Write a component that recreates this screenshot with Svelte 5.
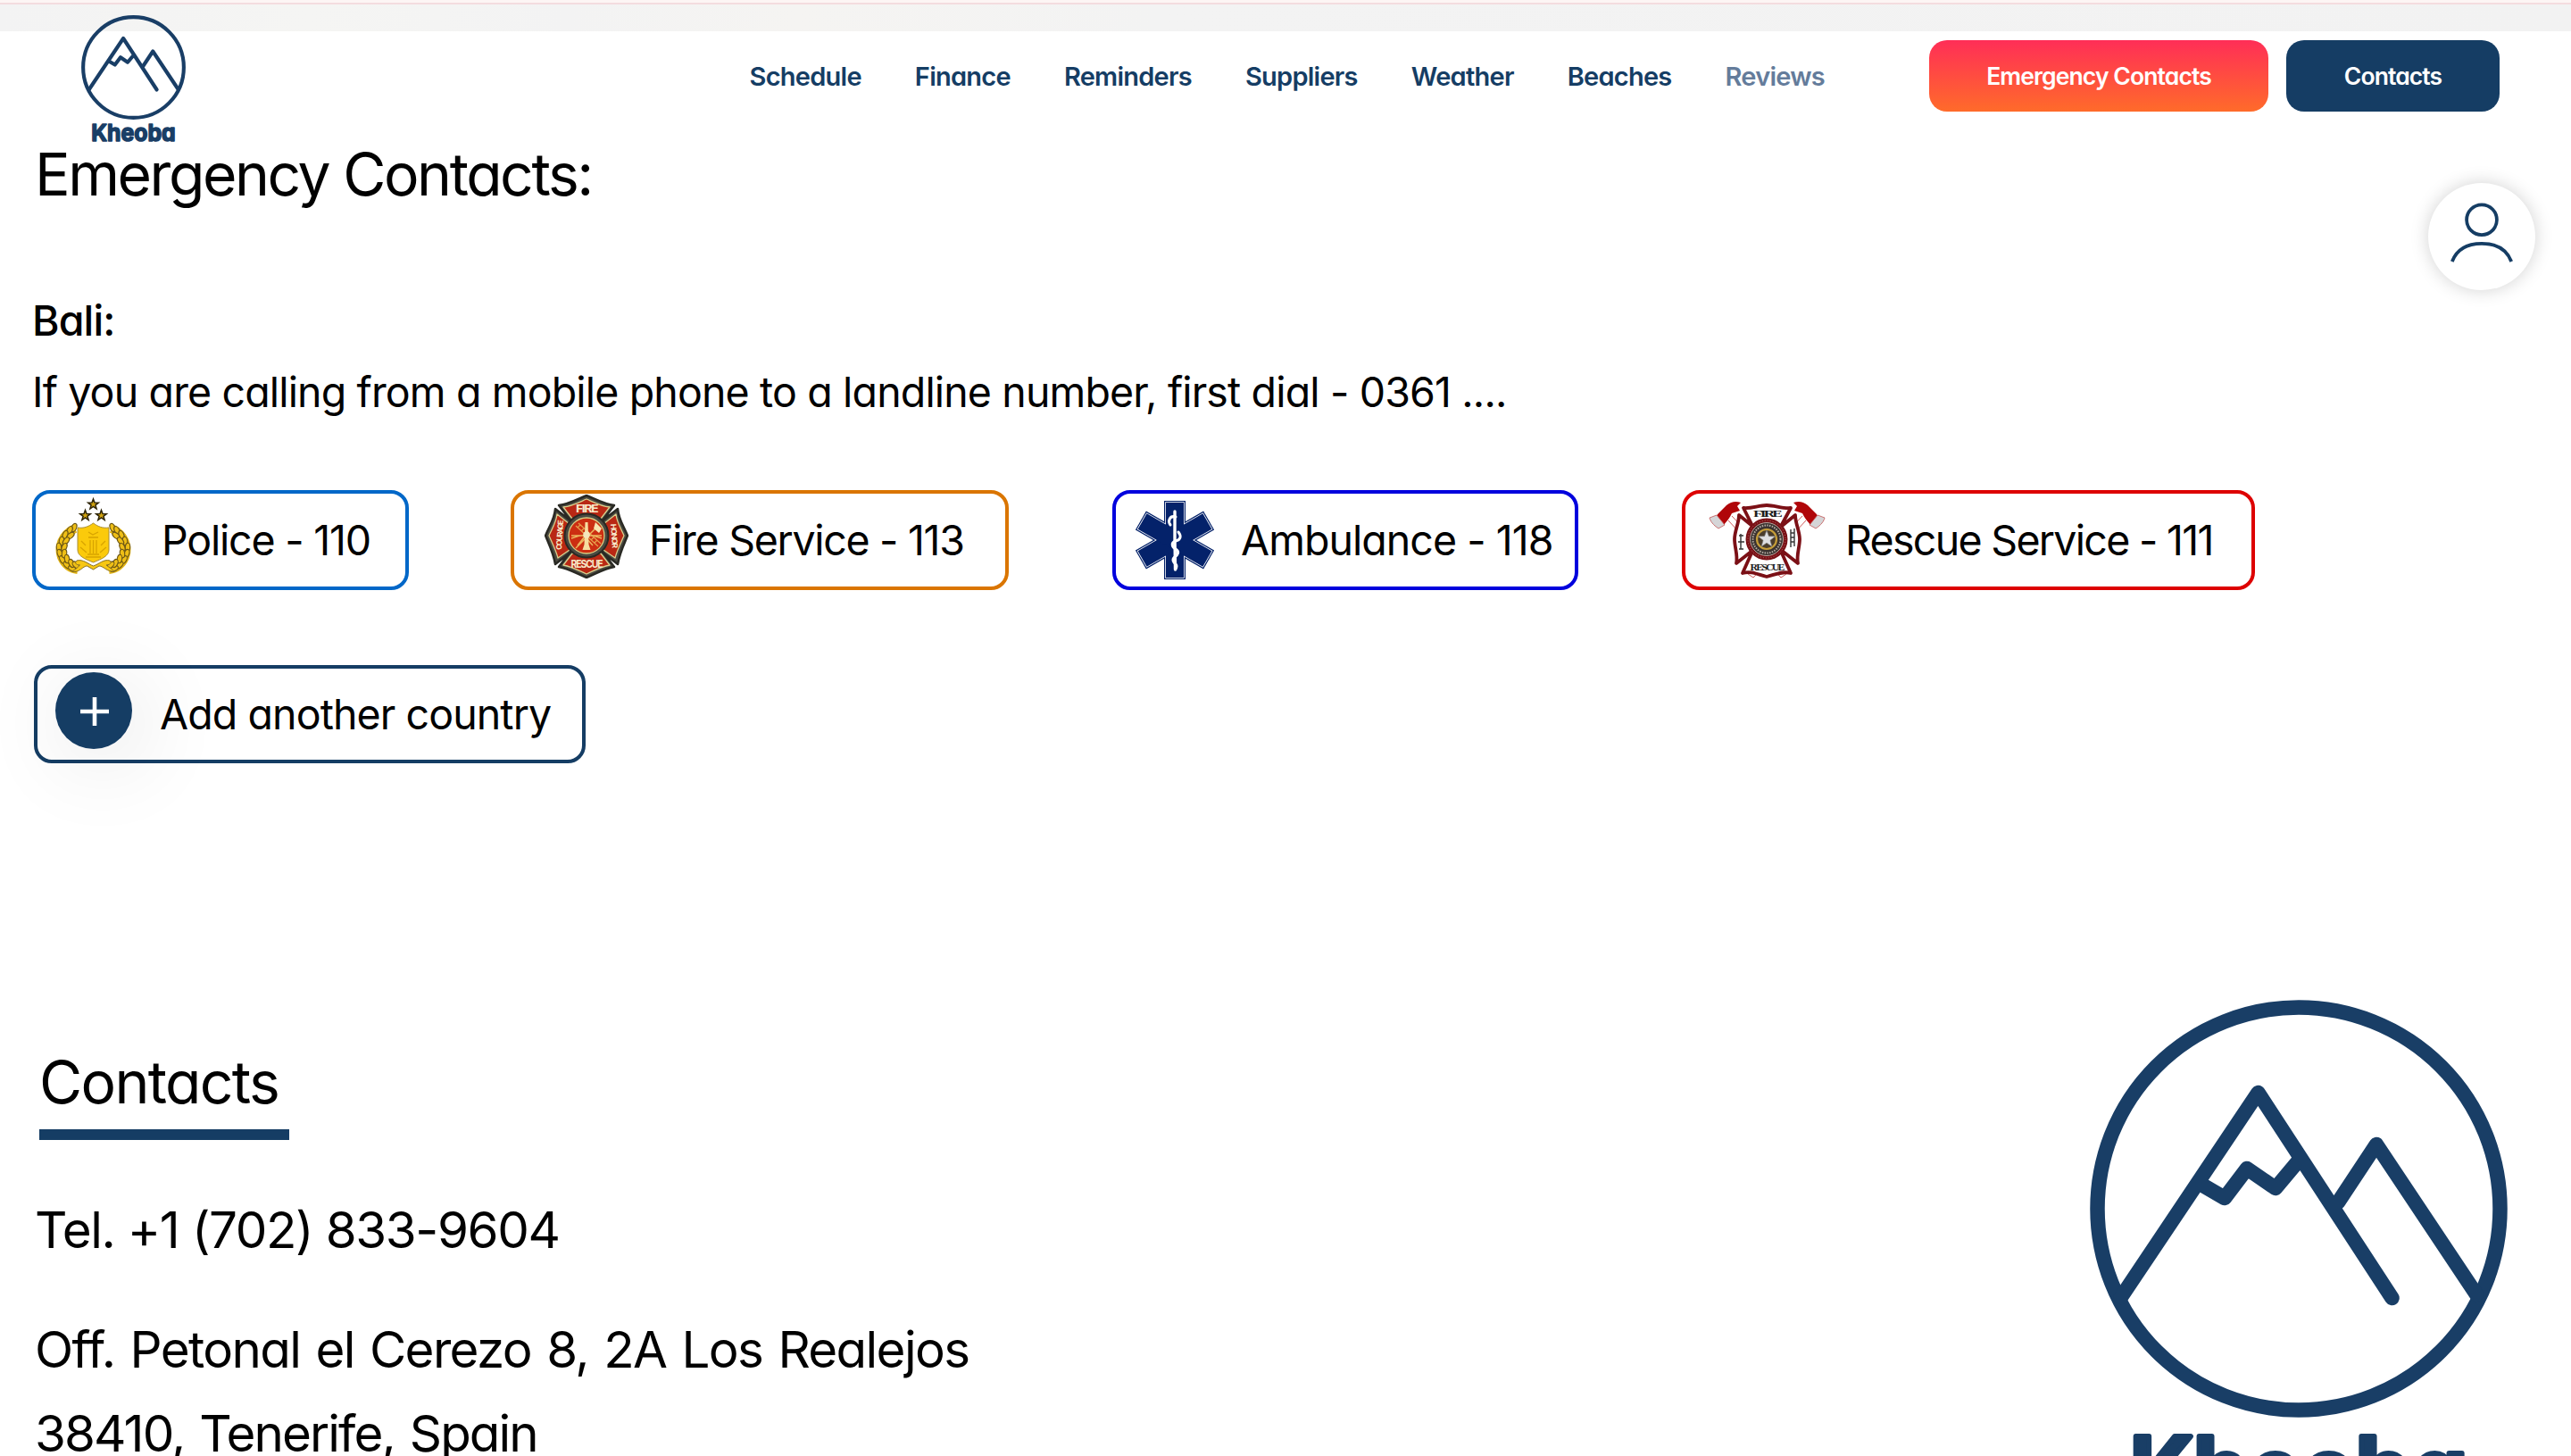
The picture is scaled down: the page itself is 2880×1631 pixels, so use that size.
<script>
  const nav = ['Schedule', 'Finance', 'Reminders', 'Suppliers', 'Weather', 'Beaches', 'Reviews'];
  const services = [
    { id: 'police', label: 'Police - 110' },
    { id: 'fire', label: 'Fire Service - 113' },
    { id: 'ambulance', label: 'Ambulance - 118' },
    { id: 'rescue', label: 'Rescue Service - 111' }
  ];
  const star = 'M0-6 1.5-2 5.8-1.9 2.4.8 3.6 5 0 2.5-3.6 5-2.4.8-5.8-1.9-1.5-2Z';
  // leaf positions around the left half of the wreath: x, y, angle
  const leaves = [
    [23, 36, 20], [18, 39, 28], [13, 44, 22], [9, 51, 8], [6, 58, -4], [7, 65, -18], [10, 72, -30], [15, 78, -45], [21, 82, -60],
    [19, 45, 50], [14, 51, 38], [12, 58, 24], [12, 65, 8], [15, 71, -8], [20, 76, -26], [25, 78, -45]
  ];
  const limbs = [0, 60, 120];
</script>

{#snippet mark(cls)}
  <svg class={cls} viewBox="0 0 468 592" fill="none">
    <g stroke="#193e66" stroke-width="16.5" stroke-linecap="round" stroke-linejoin="round">
      <circle cx="234" cy="234" r="225.5" />
      <path d="M35 333 188.500 104 338.500 334M127 208l24 14 25-33 32 22 26-31M278 227l43-65 112 168" />
    </g>
    <text x="45" y="565" textLength="378" lengthAdjust="spacingAndGlyphs" class="word">Kheoba</text>
  </svg>
{/snippet}

{#snippet police()}
  <svg class="emblem" viewBox="0 0 90 92">
    {#each [[44.500, 10], [35.500, 22.500], [53.500, 22.500]] as [x, y]}
      <path d={star} transform="translate({x} {y})" fill="#d0a20f" stroke="#2e2508" stroke-width="1.500" />
    {/each}
    {#each [1, -1] as side}
      <g transform={side === 1 ? '' : 'translate(89 0) scale(-1 1)'}>
        <path d="M24 37C9 44 5 58 9 69c4 9 10 13 18 14" fill="none" stroke="#e0b213" stroke-width="10" />
        {#each leaves as [x, y, a]}
          <ellipse rx="2.700" ry="4.800" transform="translate({x} {y}) rotate({a})" fill="#efbf16" stroke="#6c5717" stroke-width="1.100" />
        {/each}
      </g>
    {/each}
    <path d="M27 36c7 1 12-1 17.500-5C50 35 55 37 62 36v25c0 7-8 10-17.500 14C35 71 27 68 27 61Z" fill="#fbca0b" stroke="#a88d35" stroke-width="1" />
    <path d="M39 47h11M41 50v15M48 50v15M38 66h13M36 69h17M31 51l5 5M30 58l7 6M58 51l-5 5M59 58l-7 6M39 41l5 3 6-3M44.500 50v15" fill="none" stroke="#d8a400" stroke-width="1.300" />
    <path d="M26 73c7-2 13 4 18.500 6C51 77 56 71 63 73c3 2 0 5-4 5 4 3 7 5 9 7-8 1-12-6-17-6l-6.500 4-7-4c-5 0-8 8-17 6 4-2 6-4 9-7-5 0-6-3-3.500-5Z" fill="#f7c713" stroke="#877025" stroke-width="1" />
  </svg>
{/snippet}

{#snippet fire()}
  <svg class="emblem" viewBox="0 0 94 94">
    <g stroke="#292923" stroke-width="2.500" stroke-linejoin="round">
      <path d="M16 12C27 11 35 6 47 1c12 5 20 10 31 11L65 29H29ZM16 81c11 2 19 7 31 12 12-5 20-10 31-12L65 64H29ZM12 16C11 28 6 34 1 46c5 12 9 20 11 32l18-14V30ZM82 16c1 12 6 18 11 30-5 12-9 20-11 32L64 64V30Z" fill="#4b4a42" />
      <path d="M21 14c10-1 17-5 26-9 9 4 16 8 26 9L63 27H31ZM21 79c10 2 17 6 26 10 9-4 16-8 26-10L63 66H31ZM14 22C13 31 9 37 5 46c4 9 8 17 10 25l13-9V33ZM80 22c1 9 5 15 9 24-4 9-8 17-10 25l-13-9V33Z" fill="#b92814" stroke="#d9d08d" stroke-width="1.300" />
    </g>
    <circle cx="47" cy="46" r="24.500" fill="#4b4a42" stroke="#292923" stroke-width="2" />
    <circle cx="47" cy="46" r="20" fill="#cc2e12" stroke="#d9cf83" stroke-width="1.300" />
    <path d="M35 35 60 58M38 32l25 23M37 37l3-3M41 41l3-3M52 51l3-3M56 54l3-3" stroke="#e7a04c" stroke-width="1.200" />
    <path d="M60 35 35 60M30 46h34M30 49q17-7 34 0M37 57l8-10 9 10" fill="none" stroke="#ecb75e" stroke-width="1.500" />
    <path d="M45.500 31h3l1 25 2 6h-9l2-6Z" fill="#f6dda0" />
    <path d="m57 31 7 7-3 5-6-5Z" fill="#f8e5b0" />
    <circle cx="47" cy="45" r="3.800" fill="#f4e6bd" />
    <g class="badge-text" fill="#f8eacb">
      <text x="47" y="19.500" text-anchor="middle" font-size="11.500" textLength="24" lengthAdjust="spacingAndGlyphs">FIRE</text>
      <text x="47" y="82" text-anchor="middle" font-size="12" textLength="35" lengthAdjust="spacingAndGlyphs">RESCUE</text>
      <text transform="translate(20 46) rotate(-86)" text-anchor="middle" font-size="8.500" textLength="32" lengthAdjust="spacingAndGlyphs">COURAGE</text>
      <text transform="translate(75 46) rotate(86)" text-anchor="middle" font-size="8.500" textLength="26" lengthAdjust="spacingAndGlyphs">HONOR</text>
    </g>
  </svg>
{/snippet}

{#snippet ambulance()}
  <svg class="emblem" viewBox="0 0 90 90">
    {#each limbs as a}
      <rect x="33" y="1" width="24" height="88" transform="rotate({a} 45 45)" fill="#04226a" />
    {/each}
    {#each limbs as a}
      <rect x="34.200" y="2.200" width="21.600" height="85.600" transform="rotate({a} 45 45)" fill="#fff" />
    {/each}
    {#each limbs as a}
      <rect x="35" y="3" width="20" height="84" transform="rotate({a} 45 45)" fill="#04226a" />
    {/each}
    <path d="M45 13v30M45 43l.5 35" stroke="#fff" stroke-width="3.400" stroke-linecap="round" fill="none" />
    <path d="M46 19c-7-2-9 5-6 9M49 36c4 5 2 9-3 10-6 2-4 7 0 9 5 3 2 7-1 9-4 3-1 6 1 8" fill="none" stroke="#fff" stroke-width="3" stroke-linecap="round" />
    <path d="M47 72c2 3 0 5-1 7" stroke="#fff" stroke-width="1.500" fill="none" />
  </svg>
{/snippet}

{#snippet rescue()}
  <svg class="emblem wide" viewBox="0 0 132 88">
    {#each [1, -1] as side}
      <g transform={side === 1 ? '' : 'translate(131 0) scale(-1 1)'}>
        <path d="m26 17 61 65-6 4L22 22" fill="#fff" stroke="#cf5a5a" stroke-width="1" />
        <path d="M10 15 20 5c5-4 10-5 16-3l-4 4 3 5-9 3c-2 5-6 9-9 13L9 17Z" fill="#b00609" />
        <path d="m9 16 9 11-7 4C5 27 2 23 1 19Z" fill="#d5d5d7" stroke="#c25555" stroke-width=".8" />
      </g>
    {/each}
    <g fill="#fff" stroke="#7b1016" stroke-width="3.800" stroke-linejoin="round">
      <path d="M39 8c9 1 17-3 26-3s18 4 27 3L79 32H51ZM38 81c10-3 18 2 27 4 9-2 18-7 27-4L79 52H51ZM34 16c0 9-5 18-5 27s4 18 2 27l19-15V29ZM97 16c0 9 5 18 5 27s-4 18-2 27L81 55V29Z" />
    </g>
    <circle cx="65" cy="43" r="23.500" fill="#791016" />
    <circle cx="65" cy="43" r="18.500" fill="#3b3330" stroke="#b5a79e" stroke-width="1" />
    <circle cx="65" cy="43" r="15.500" fill="none" stroke="#b6ada4" stroke-width="2" stroke-dasharray="1.500 1.300" />
    <circle cx="65" cy="43" r="21" fill="none" stroke="#bd7b70" stroke-width=".9" stroke-dasharray="1 2" />
    <circle cx="65" cy="43" r="11" fill="#4a3c2b" stroke="#c69e39" stroke-width="2.200" />
    <path d={star} transform="translate(65 43) scale(1.650)" fill="#dedee0" stroke="#777" stroke-width=".4" />
    <path d="M36 37v17M34 39h5M33 46h7M34 54h5M92 32v20M96 31v20M92 36h4M92 41h4M92 46h4" stroke="#333" stroke-width="1.400" fill="none" />
    <g class="serif" fill="#1d1d1d">
      <text x="65" y="18" text-anchor="middle" font-size="10.500" textLength="30" lengthAdjust="spacingAndGlyphs">FIRE</text>
      <text x="65" y="77.500" text-anchor="middle" font-size="11" textLength="37" lengthAdjust="spacingAndGlyphs">RESCUE</text>
    </g>
  </svg>
{/snippet}

<div class="page">
  <div class="strip"></div>

  <header>
    {@render mark('logo')}
    <nav>
      {#each nav as item}
        <a href="#top" class:muted={item === 'Reviews'}>{item}</a>
      {/each}
    </nav>
    <div class="actions">
      <button class="btn hot">Emergency Contacts</button>
      <button class="btn navy">Contacts</button>
    </div>
  </header>

  <button class="user" aria-label="Account">
    <svg viewBox="0 0 72 68" fill="none" stroke="#153d64" stroke-width="3.800">
      <circle cx="36" cy="20.200" r="16.900" />
      <path d="M2.800 67C8 53 20 46.800 36 46.800S64 53 69.200 67" />
    </svg>
  </button>

  <main>
    <h1>Emergency Contacts:</h1>
    <div class="intro">
      <h2>Bali:</h2>
      <p>If you are calling from a mobile phone to a landline number, first dial - 0361 ....</p>
    </div>

    <div class="cards">
      {#each services as s}
        <div class="card {s.id}">
          {#if s.id === 'police'}{@render police()}
          {:else if s.id === 'fire'}{@render fire()}
          {:else if s.id === 'ambulance'}{@render ambulance()}
          {:else}{@render rescue()}{/if}
          <span>{s.label}</span>
        </div>
      {/each}
    </div>

    <button class="add">
      <span class="plus">
        <svg viewBox="0 0 32 32"><path d="M16 0v32M0 16h32" stroke="#fff" stroke-width="4.600" /></svg>
      </span>
      <span class="add-label">Add another country</span>
    </button>

    <section class="contacts">
      <div>
        <h3>Contacts</h3>
        <p class="tel">Tel. +1 (702) 833-9604</p>
        <p class="addr">Off. Petonal el Cerezo 8, 2A Los Realejos<br /><span class="city">38410, Tenerife, Spain</span></p>
      </div>
      {@render mark('big')}
    </section>
  </main>
</div>

<style>
  :global(body) { margin: 0; background: #fff; overflow: hidden; }
  .page {
    position: relative;
    display: flow-root;
    height: 1631px;
    overflow: hidden;
    background: linear-gradient(#fdf5f4 3px, #fff 3px);
    color: #000;
    font-family: Inter, Lato, sans-serif;
    font-feature-settings: 'cv11';
    font-weight: 400;
    white-space: nowrap;
  }
  h1, h2, h3, p { margin: 0; font-weight: inherit; }
  button { font: inherit; font-feature-settings: inherit; color: inherit; border: 0; padding: 0; background: none; }

  .strip {
    height: 30px;
    border-top: 2px solid #f4dcdf;
    background: linear-gradient(90deg, #f3f3f3, #f5f5f3 12%, #f3f3f3 22%, #f5f4f2 31%, #f3f3f3 45%, #f2f2f2);
    margin-top: 3px;
  }

  header {
    position: absolute;
    inset: 0 0 auto 0;
    height: 170px;
    box-sizing: border-box;
    padding: 0 80px 0 91px;
    display: flex;
    align-items: center;
  }
  .logo { width: 117px; height: 148px; margin-top: 12px; }
  .word { font: 700 104px Inter, sans-serif; font-feature-settings: 'cv11'; fill: #193e66; stroke: #193e66; stroke-width: 6; stroke-linejoin: round; }
  nav { display: flex; gap: 60px; margin: 2px 0 0 auto; }
  nav a { color: #153d64; text-decoration: none; font-size: 29px; font-weight: 600; letter-spacing: -0.750px; line-height: 40px; }
  nav a.muted { color: #647c9b; }
  .actions { display: flex; gap: 20px; margin-left: 117px; }
  .btn { height: 80px; border-radius: 20px; color: #fff; font-size: 26.500px; font-weight: 600; letter-spacing: -0.900px; }
  .hot { width: 380px; background: linear-gradient(#ff2e57, #ff6b2a); }
  .navy { width: 239px; background: #153d64; }

  .user {
    position: absolute;
    top: 205px;
    right: 40px;
    width: 120px;
    height: 120px;
    border-radius: 50%;
    background: #fff;
    box-shadow: 0 0 20px rgba(0, 0, 0, 0.18);
    display: flex;
    justify-content: center;
  }
  .user svg { width: 72px; height: 68px; margin-top: 21px; }

  main { padding: 120px 0 0 36px; }
  h1 { font-size: 66px; line-height: 80px; letter-spacing: -2.450px; padding-left: 3px; }
  .intro { padding: 84px 0 70px; font-size: 46.500px; line-height: 80px; letter-spacing: -0.850px; }
  .intro h2 { font-size: inherit; font-weight: 500; }

  .cards { display: flex; gap: 114px; }
  .card {
    box-sizing: border-box;
    height: 112px;
    border: 4px solid;
    border-radius: 20px;
    display: flex;
    align-items: center;
    font-size: 46.500px;
  }
  .card span { color: #000; }
  .emblem { width: 90px; flex: none; }
  .badge-text { font-weight: 700; }
  .serif { font-family: 'Liberation Serif', serif; font-weight: 700; }
  .police { width: 422px; border-color: #0067c8; padding-left: 20px; gap: 31px; letter-spacing: -1.200px; }
  .police .emblem { margin-top: -8px; }
  .fire { width: 558px; border-color: #da7500; padding-left: 34px; gap: 23px; letter-spacing: -1.300px; margin-right: 2px; }
  .fire .emblem { width: 94px; margin-top: -9px; }
  .ambulance { width: 522px; border-color: #0000dd; padding-left: 21px; gap: 29px; letter-spacing: -0.950px; margin-right: 2px; }
  .rescue { width: 642px; border-color: #dd0000; padding-left: 26px; gap: 21px; letter-spacing: -1.700px; }
  .rescue .emblem { width: 132px; }

  .add {
    box-sizing: border-box;
    width: 618px;
    height: 110px;
    margin: 84px 0 0 2px;
    border: 4px solid #153d64;
    border-radius: 20px;
    padding-left: 20px;
    display: flex;
    align-items: center;
    gap: 31px;
    font-size: 46.500px;
    letter-spacing: -0.900px;
  }
  .plus {
    width: 86px;
    height: 86px;
    margin-top: -8px;
    border-radius: 50%;
    background: #153d64;
    box-shadow: 10px 14px 100px rgba(0, 0, 0, 0.12);
    display: flex;
    align-items: center;
    justify-content: center;
  }
  .plus svg { width: 32px; height: 32px; margin-left: 2px; margin-top: 2px; }
  .add-label { margin-top: -1px; }

  .contacts { display: flex; justify-content: space-between; padding: 265px 71px 0 0; }
  h3 {
    width: 280px;
    margin: 52px 0 0 8px;
    line-height: 80px;
    font-size: 66px;
    letter-spacing: -1.700px;
    border-bottom: 12px solid #153d64;
    padding-bottom: 13px;
  }
  .tel, .addr { padding-left: 3px; font-size: 56.500px; line-height: 94px; letter-spacing: -1.400px; }
  .tel { margin-top: 54px; }
  .addr { margin-top: 40px; letter-spacing: -1.650px; word-spacing: 3px; }
  .city { letter-spacing: -1.900px; }
  .big { width: 468px; height: 592px; flex: none; }
</style>
